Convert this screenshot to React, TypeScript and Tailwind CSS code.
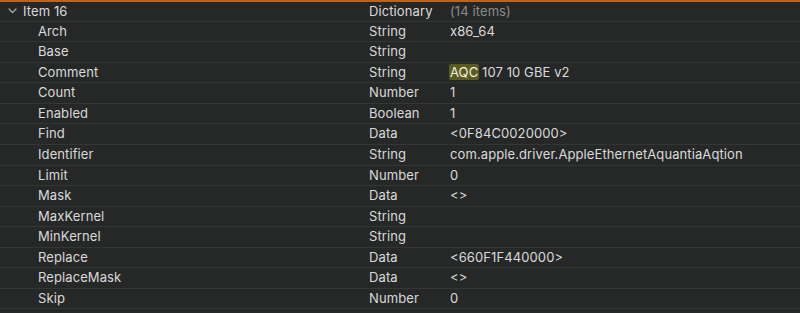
import React from 'react';

const rows = [
  { key: 'Arch', type: 'String', value: 'x86_64' },
  { key: 'Base', type: 'String', value: '' },
  { key: 'Comment', type: 'String', value: 'AQC 107 10 GBE v2', highlight: 'AQC' },
  { key: 'Count', type: 'Number', value: '1' },
  { key: 'Enabled', type: 'Boolean', value: '1' },
  { key: 'Find', type: 'Data', value: '<0F84C0020000>' },
  { key: 'Identifier', type: 'String', value: 'com.apple.driver.AppleEthernetAquantiaAqtion' },
  { key: 'Limit', type: 'Number', value: '0' },
  { key: 'Mask', type: 'Data', value: '<>' },
  { key: 'MaxKernel', type: 'String', value: '' },
  { key: 'MinKernel', type: 'String', value: '' },
  { key: 'Replace', type: 'Data', value: '<660F1F440000>' },
  { key: 'ReplaceMask', type: 'Data', value: '<>' },
  { key: 'Skip', type: 'Number', value: '0' },
];

function Value({ value, highlight }: { value: string; highlight?: string }) {
  if (highlight && value.startsWith(highlight)) {
    return (
      <span>
        <span className="bg-[#5b5a1f] text-[#f2f2e0] rounded-[2px] px-[1px] -mx-[1px]">{highlight}</span>
        {value.slice(highlight.length)}
      </span>
    );
  }
  return <span>{value}</span>;
}

export default function App() {
  return (
    <div className="w-[800px] h-[313px] overflow-hidden bg-[#262828] font-['Inter',sans-serif] text-[13px] tracking-[0.1px] text-[#dadada]">
      <div className="h-[2px] bg-[#c8600f]" />
      <div className="flex items-center h-[19.6px] border-b border-[#343636]">
        <div className="w-[23px] flex justify-center pl-[2px]">
          <svg width="9" height="6" viewBox="0 0 9 6" fill="none">
            <path d="M1 1l3.5 3.5L8 1" stroke="#a8a8a8" strokeWidth="1.2" strokeLinecap="round" strokeLinejoin="round" />
          </svg>
        </div>
        <div className="w-[346px]">Item 16</div>
        <div className="w-[81px]">Dictionary</div>
        <div className="text-[#8b8b8b]">(14 items)</div>
      </div>
      {rows.map((r) => (
        <div key={r.key} className="flex items-center h-[20.57px] border-b border-[#343636]">
          <div className="w-[369px] pl-[38px]">{r.key}</div>
          <div className="w-[81px]">{r.type}</div>
          <div>
            <Value value={r.value} highlight={r.highlight} />
          </div>
        </div>
      ))}
    </div>
  );
}
